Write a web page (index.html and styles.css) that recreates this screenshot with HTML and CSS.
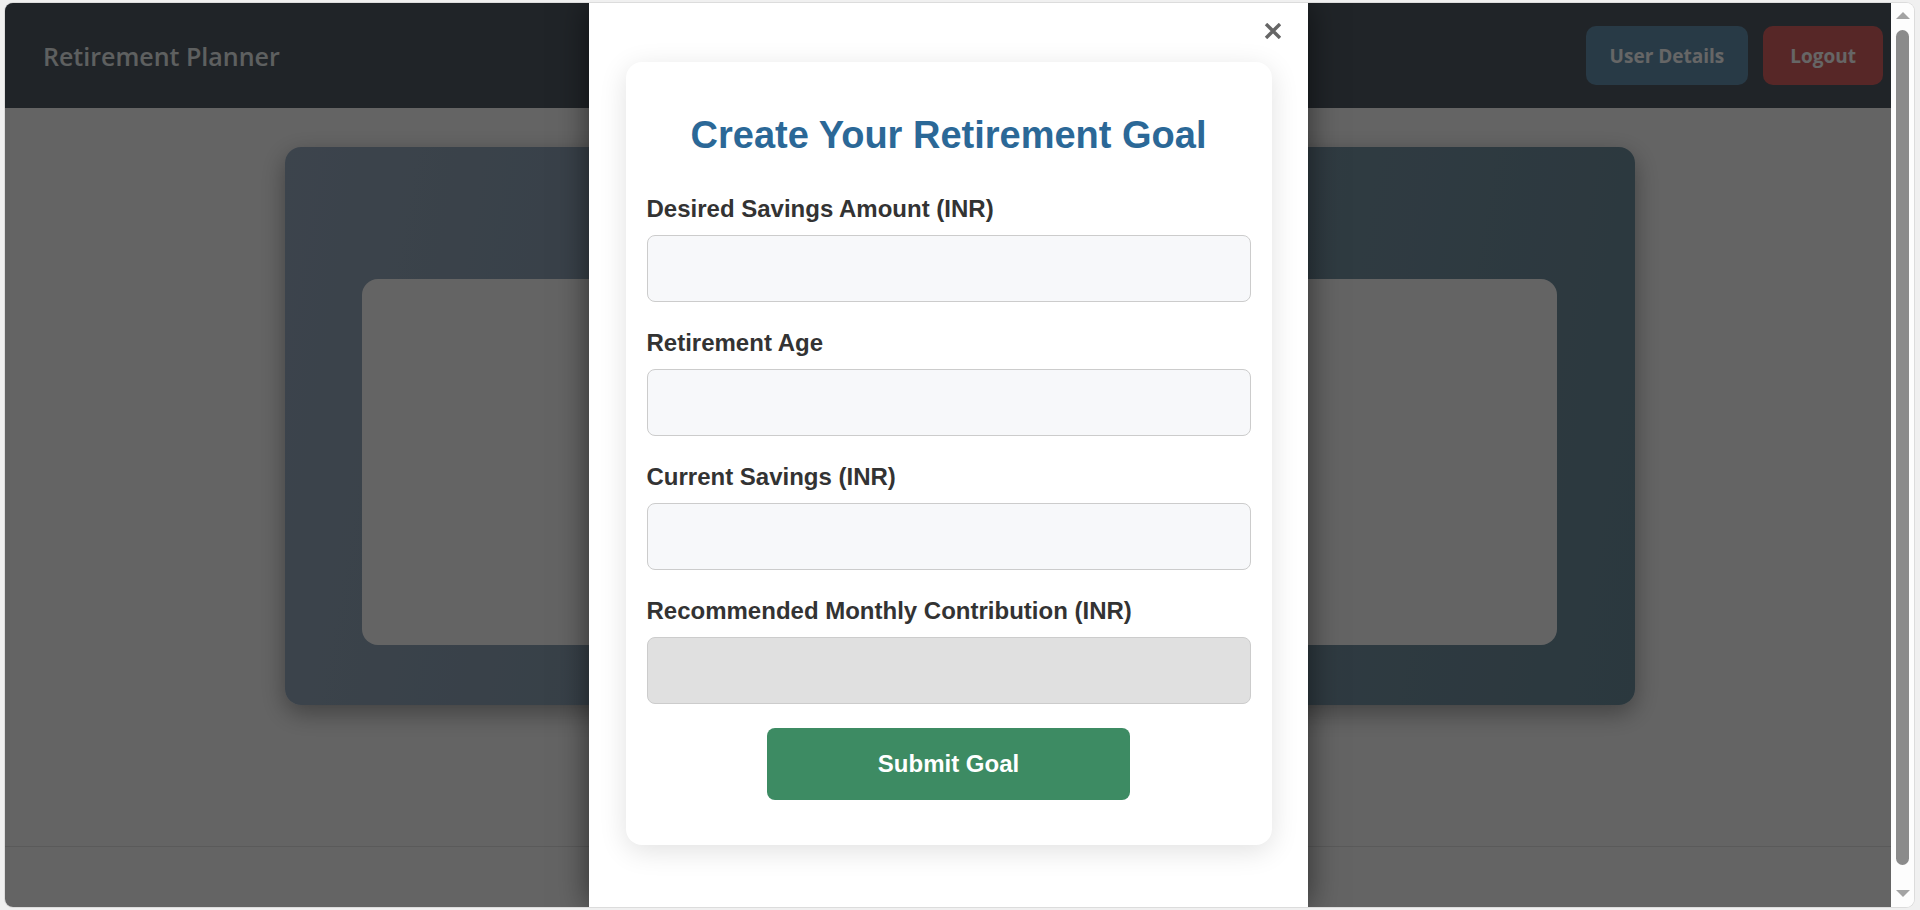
FILE: index.html
```html
<!DOCTYPE html>
<html lang="en">
<head>
<meta charset="utf-8">
<title>Retirement Planner</title>
<link rel="stylesheet" href="styles.css">
</head>
<body>
<div class="window">
  <div class="viewport">
    <header class="topbar">
      <h1 class="brand">Retirement Planner</h1>
      <nav class="actions">
        <button class="btn btn-user" type="button">User Details</button>
        <button class="btn btn-logout" type="button">Logout</button>
      </nav>
    </header>
    <main class="main">
      <section class="dashboard">
        <div class="dashboard-panel"></div>
      </section>
    </main>
    <footer class="footer"></footer>

    <div class="overlay">
      <div class="modal">
        <button class="close" type="button" aria-label="Close">
          <svg width="18" height="16" viewBox="0 0 18 16"><path d="M2 1 L16 15 M16 1 L2 15" stroke="#666" stroke-width="3.4" stroke-linecap="butt"/></svg>
        </button>
        <div class="goal-card">
          <h2 class="goal-title">Create Your Retirement Goal</h2>
          <form class="goal-form">
            <div class="field">
              <label>Desired Savings Amount (INR)</label>
              <input type="text">
            </div>
            <div class="field">
              <label>Retirement Age</label>
              <input type="text">
            </div>
            <div class="field">
              <label>Current Savings (INR)</label>
              <input type="text">
            </div>
            <div class="field field-last">
              <label>Recommended Monthly Contribution (INR)</label>
              <input type="text" class="readonly" readonly>
            </div>
            <div class="submit-row">
              <button class="submit" type="button">Submit Goal</button>
            </div>
          </form>
        </div>
      </div>
    </div>
  </div>
  <div class="scrollbar">
    <span class="arrow arrow-up"></span>
    <span class="thumb"></span>
    <span class="arrow arrow-down"></span>
  </div>
</div>
</body>
</html>
```

FILE: styles.css
```css
* { box-sizing: border-box; }

html, body {
  margin: 0;
  padding: 0;
}

body {
  background: #f0f0f0;
  width: 1920px;
  height: 910px;
  overflow: hidden;
  padding: 3px 6px 3px 5px;
}

.window {
  display: flex;
  width: 1909px;
  height: 904px;
  border-radius: 8px;
  overflow: hidden;
  background: #fdfdfd;
  box-shadow: 0 0 0 1px #dcdcdc;
}

.viewport {
  position: relative;
  width: 1886px;
  height: 904px;
  overflow: hidden;
  background: #fafafa;
  display: flex;
  flex-direction: column;
}

/* Header */
.topbar {
  flex: 0 0 105px;
  display: flex;
  align-items: center;
  justify-content: space-between;
  padding: 0 8px 0 38px;
  background: #525a64;
}

.brand {
  margin: 0;
  font-family: "Open Sans", "Noto Sans", sans-serif;
  font-weight: 600;
  font-size: 25px;
  color: #ecf0f1;
}

.actions {
  display: flex;
  gap: 15px;
}

.btn {
  height: 59px;
  padding: 0 27px;
  border: none;
  border-radius: 10px;
  font-family: "Open Sans", "Noto Sans", sans-serif;
  font-weight: 700;
  font-size: 19px;
  color: #ffffff;
}

.btn-user { background: #6491af; padding: 0 24px; }
.btn-logout { background: #da6363; }

/* Main dashboard */
.main {
  display: flex;
  justify-content: center;
  padding: 39px 0 0 23px;
}

.dashboard {
  width: 1350px;
  padding: 132px 78px 60px 77px;
  border-radius: 16px;
  background: linear-gradient(100deg, #97aabe 0%, #7f98aa 55%, #6c8d9c 100%);
  box-shadow: 0 8px 24px rgba(0, 0, 0, 0.35);
}

.dashboard-panel {
  height: 366px;
  border-radius: 16px;
  background: #fafafa;
}

.footer {
  margin-top: 141px;
  height: 61px;
  border-top: 1px solid #e0e0e0;
}

/* Modal */
.overlay {
  position: absolute;
  inset: 0;
  background: rgba(0, 0, 0, 0.6);
  display: flex;
  justify-content: center;
}

.modal {
  position: relative;
  width: 719px;
  height: 100%;
  background: #ffffff;
  padding: 59px 36px 0 37px;
  box-shadow: 0 0 30px rgba(0, 0, 0, 0.55);
}

.close {
  position: absolute;
  top: 20px;
  right: 26px;
  padding: 0;
  border: none;
  background: none;
  line-height: 0;
}

.goal-card {
  width: 646px;
  padding: 52px 21px 45px;
  border-radius: 16px;
  background: #ffffff;
  box-shadow: 0 6px 28px rgba(0, 0, 0, 0.12);
  font-family: "Liberation Sans", Arial, sans-serif;
}

.goal-title {
  margin: 0 0 38px;
  text-align: center;
  font-size: 38px;
  font-weight: 700;
  color: #2b6897;
}

.field {
  margin-bottom: 27px;
}

.field-last {
  margin-bottom: 24px;
}

.field label {
  display: block;
  margin-bottom: 12px;
  font-size: 24px;
  font-weight: 700;
  color: #333333;
}

.field input {
  display: block;
  width: 100%;
  height: 67px;
  border: 1px solid #cccccc;
  border-radius: 8px;
  background: #f7f8fa;
  font-size: 22px;
}

.field input.readonly {
  background: #e0e0e0;
}

.submit-row {
  display: flex;
  justify-content: center;
}

.submit {
  width: 363px;
  height: 72px;
  border: none;
  border-radius: 8px;
  background: #3d8b63;
  color: #ffffff;
  font-family: "Liberation Sans", Arial, sans-serif;
  font-size: 24px;
  font-weight: 700;
}

/* Scrollbar */
.scrollbar {
  width: 23px;
  height: 904px;
  display: flex;
  flex-direction: column;
  align-items: center;
  padding: 9px 0 10px;
  background: #fdfdfd;
}

.arrow {
  width: 0;
  height: 0;
  border-left: 7.5px solid transparent;
  border-right: 7.5px solid transparent;
}

.arrow-up {
  border-bottom: 7px solid #a3a3a3;
  margin-bottom: 11px;
}

.arrow-down {
  border-top: 7px solid #a3a3a3;
  margin-top: 25px;
}

.thumb {
  width: 13px;
  flex: 1;
  border-radius: 7px;
  background: #8b8b8b;
}
```
